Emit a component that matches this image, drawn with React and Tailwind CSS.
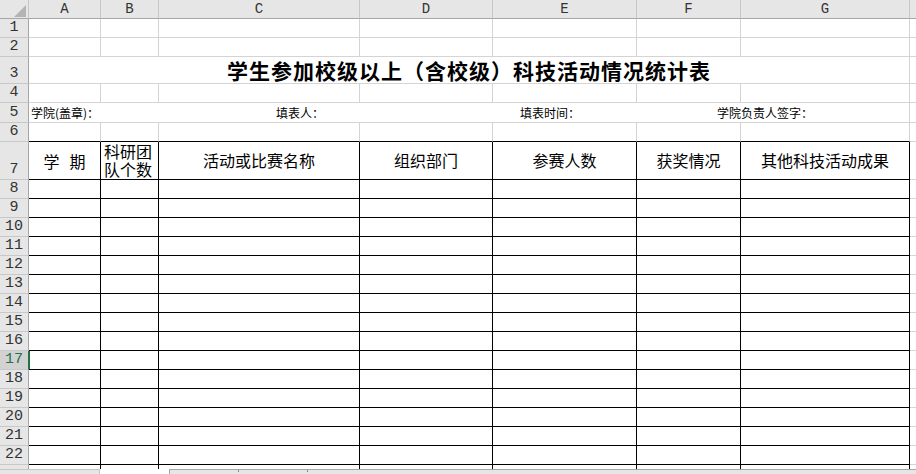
const COLS = [
  { key: 'A', w: 'w-[72px]' },
  { key: 'B', w: 'w-[58px]' },
  { key: 'C', w: 'w-[201px]' },
  { key: 'D', w: 'w-[133px]' },
  { key: 'E', w: 'w-[144px]' },
  { key: 'F', w: 'w-[104px]' },
  { key: 'G', w: 'w-[169px]' },
];

const GRID = 'border-[#d4d4d4]';
const DATA_ROWS = [8, 9, 10, 11, 12, 13, 14, 15, 16, 17, 18, 19, 20, 21, 22];

function RowHead({ n, h, selected }) {
  return (
    <div
      className={`flex w-[29px] shrink-0 items-end justify-center border-r border-b border-b-[#c8c8c8] font-['Liberation_Mono',monospace] text-[15px] leading-[18px] ${h} ${
        selected ? 'border-r-[#217346] bg-[#d2d2d2] text-[#217346]' : 'border-r-[#a6a6a6] bg-[#e6e6e6] text-[#333]'
      }`}
    >
      {n}
    </div>
  );
}

function GridRow({ n, h = 'h-[19px]', children }) {
  return (
    <div className="flex">
      <RowHead n={n} h={h} />
      {children}
    </div>
  );
}

function PlainCells({ h = 'h-[19px]' }) {
  return (
    <>
      {COLS.map((c) => (
        <div key={c.key} className={`${c.w} ${h} shrink-0 border-r border-b ${GRID}`} />
      ))}
      <div className={`min-w-0 flex-1 ${h} border-b ${GRID}`} />
    </>
  );
}

const HEADERS = [
  <div className="flex w-full justify-center gap-[10px] pt-[9px]"><span>学</span><span>期</span></div>,
  <div className="px-[3px] leading-[18px]">科研团<br />队个数</div>,
  <div className="pt-[8px] text-center">活动或比赛名称</div>,
  <div className="pt-[8px] text-center">组织部门</div>,
  <div className="pt-[8px] text-center">参赛人数</div>,
  <div className="pt-[8px] text-center">获奖情况</div>,
  <div className="pt-[8px] text-center">其他科技活动成果</div>,
];

export default function App() {
  return (
    <div className="h-[474px] w-[916px] overflow-hidden bg-white font-['Noto_Sans_CJK_SC',sans-serif] text-black">
      {/* column letters */}
      <div className="flex h-[19px]">
        <div className="relative w-[29px] shrink-0 border-r border-b border-r-[#c6c6c6] border-b-[#a6a6a6] bg-[#e6e6e6]">
          <svg className="absolute top-[5px] left-[14px]" width="12" height="12" viewBox="0 0 12 12">
            <polygon points="12,0 12,12 0,12" fill="#b4b4b4" />
          </svg>
        </div>
        {COLS.map((c) => (
          <div
            key={c.key}
            className={`${c.w} flex shrink-0 items-center justify-center border-r border-b border-r-[#c6c6c6] border-b-[#a6a6a6] bg-[#e6e6e6] font-['Liberation_Mono',monospace] text-[14px] text-[#333]`}
          >
            {c.key}
          </div>
        ))}
        <div className="min-w-0 flex-1 border-b border-b-[#a6a6a6] bg-[#e6e6e6]" />
      </div>

      <GridRow n="1"><PlainCells /></GridRow>
      <GridRow n="2"><PlainCells /></GridRow>

      {/* title */}
      <GridRow n="3" h="h-[27px]">
        <div className={`flex h-[27px] w-[881px] shrink-0 items-end justify-center border-r border-b ${GRID} pb-[1px]`}>
          <span className="text-[21px] leading-[24px] font-bold tracking-[1px]">学生参加校级以上（含校级）科技活动情况统计表</span>
        </div>
        <div className={`h-[27px] min-w-0 flex-1 border-b ${GRID}`} />
      </GridRow>

      <GridRow n="4"><PlainCells /></GridRow>

      <GridRow n="5" h="h-[20px]">
        <div className={`flex h-[20px] w-[881px] shrink-0 items-center whitespace-nowrap border-r border-b ${GRID} text-[12px] leading-[14px]`}>
          <div className="w-[247px] shrink-0 pl-[2px]">学院(盖章)：</div>
          <div className="w-[244px] shrink-0">填表人：</div>
          <div className="w-[197px] shrink-0">填表时间：</div>
          <div>学院负责人签字：</div>
        </div>
        <div className={`h-[20px] min-w-0 flex-1 border-b ${GRID}`} />
      </GridRow>

      <GridRow n="6">
        {COLS.map((c) => (
          <div key={c.key} className={`${c.w} h-[19px] shrink-0 border-r border-b border-r-[#d4d4d4] border-b-black`} />
        ))}
        <div className={`h-[19px] min-w-0 flex-1 border-b ${GRID}`} />
      </GridRow>

      {/* table header */}
      <GridRow n="7" h="h-[38px]">
        {COLS.map((c, i) => (
          <div key={c.key} className={`${c.w} h-[38px] shrink-0 overflow-hidden border-r border-b border-black text-[16px] leading-[20px]`}>
            {HEADERS[i]}
          </div>
        ))}
        <div className={`h-[38px] min-w-0 flex-1 border-b ${GRID}`} />
      </GridRow>

      {DATA_ROWS.map((n) => (
        <div key={n} className="flex">
          <RowHead n={n} h="h-[19px]" selected={n === 17} />
          {COLS.map((c, i) => (
            <div
              key={c.key}
              className={`${c.w} h-[19px] shrink-0 border-r border-b border-black ${n === 17 && i === 0 ? 'shadow-[inset_1px_0_0_#217346]' : ''}`}
            />
          ))}
          <div className={`h-[19px] min-w-0 flex-1 border-b ${GRID}`} />
        </div>
      ))}

      {/* cut-off row below 22 */}
      <div className="flex h-[4px]">
        <div className="w-[29px] shrink-0 border-r border-r-[#a6a6a6] bg-[#e6e6e6]" />
        {COLS.map((c) => (
          <div key={c.key} className={`${c.w} shrink-0 border-r border-black`} />
        ))}
        <div className="min-w-0 flex-1" />
      </div>

      {/* sheet tabs / scroll bar strip */}
      <div className="flex h-[5px]">
        <div className="w-[100px] shrink-0 border-t border-r border-[#c6c6c6] bg-[#e6e6e6]" />
        <div className="w-[69px] shrink-0 bg-white" />
        <div className="flex min-w-0 flex-1 border-t border-l border-[#a6a6a6] bg-[#e6e6e6]">
          <div className="h-[2px] w-[69px] shrink-0 border-r border-[#8a8a8a]" />
          <div className="h-[2px] w-[69px] shrink-0 border-r border-[#8a8a8a]" />
        </div>
      </div>
    </div>
  );
}
